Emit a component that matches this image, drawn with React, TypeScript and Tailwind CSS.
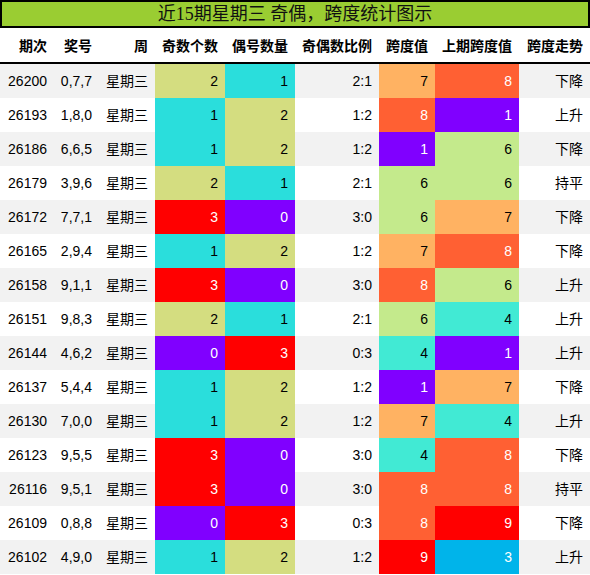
import React from "react";

type Row = [string, string, number, number, string, number, number, string];

const rows: Row[] = [
  ["26200", "0,7,7", 2, 1, "2:1", 7, 8, "下降"],
  ["26193", "1,8,0", 1, 2, "1:2", 8, 1, "上升"],
  ["26186", "6,6,5", 1, 2, "1:2", 1, 6, "下降"],
  ["26179", "3,9,6", 2, 1, "2:1", 6, 6, "持平"],
  ["26172", "7,7,1", 3, 0, "3:0", 6, 7, "下降"],
  ["26165", "2,9,4", 1, 2, "1:2", 7, 8, "下降"],
  ["26158", "9,1,1", 3, 0, "3:0", 8, 6, "上升"],
  ["26151", "9,8,3", 2, 1, "2:1", 6, 4, "上升"],
  ["26144", "4,6,2", 0, 3, "0:3", 4, 1, "上升"],
  ["26137", "5,4,4", 1, 2, "1:2", 1, 7, "下降"],
  ["26130", "7,0,0", 1, 2, "1:2", 7, 4, "上升"],
  ["26123", "9,5,5", 3, 0, "3:0", 4, 8, "下降"],
  ["26116", "9,5,1", 3, 0, "3:0", 8, 8, "持平"],
  ["26109", "0,8,8", 0, 3, "0:3", 8, 9, "下降"],
  ["26102", "4,9,0", 1, 2, "1:2", 9, 3, "上升"],
];

const countCls: Record<number, string> = {
  0: "bg-[#8000ff] text-white",
  1: "bg-[#2adedc] text-black",
  2: "bg-[#d4dd80] text-black",
  3: "bg-[#ff0000] text-white",
};

const spanCls: Record<number, string> = {
  0: "bg-[#8000ff] text-white",
  1: "bg-[#8000ff] text-white",
  2: "bg-[#2adedc] text-black",
  3: "bg-[#00b4ea] text-white",
  4: "bg-[#41ead4] text-black",
  5: "bg-[#d4dd80] text-black",
  6: "bg-[#c4ea8c] text-black",
  7: "bg-[#ffb262] text-black",
  8: "bg-[#ff6033] text-white",
  9: "bg-[#ff0000] text-white",
};

const grid =
  "grid grid-cols-[54px_45px_56px_70px_70px_84px_56px_84px_71px]";

const headers = ["期次", "奖号", "周", "奇数个数", "偶号数量", "奇偶数比例", "跨度值", "上期跨度值", "跨度走势"];

function Cell({ children, cls = "" }: { children: React.ReactNode; cls?: string }) {
  return (
    <div className={`flex items-center justify-end pr-[7px] h-[34px] ${cls}`}>
      {children}
    </div>
  );
}

export default function App() {
  return (
    <div
      className="w-[590px] h-[575px] bg-white text-[14px] text-black"
      style={{ fontFamily: '"Liberation Sans", "Noto Sans CJK SC", sans-serif' }}
    >
      <div
        className="h-[28px] border-2 border-black bg-[#9acd32] flex items-center justify-center text-[18px] text-[#111]"
        style={{ fontFamily: '"Liberation Serif", "Noto Sans CJK SC", serif' }}
      >
        近15期星期三 奇偶，跨度统计图示
      </div>
      <div className={`${grid} border-b-2 border-black`}>
        {headers.map((h) => (
          <Cell key={h} cls="font-bold pt-[3px]">
            {h}
          </Cell>
        ))}
      </div>
      {rows.map((r, i) => (
        <div key={r[0]} className={`${grid} ${i % 2 === 0 ? "bg-[#f2f2f2]" : "bg-white"}`}>
          <Cell>{r[0]}</Cell>
          <Cell>{r[1]}</Cell>
          <Cell>星期三</Cell>
          <Cell cls={countCls[r[2]]}>{r[2]}</Cell>
          <Cell cls={countCls[r[3]]}>{r[3]}</Cell>
          <Cell>{r[4]}</Cell>
          <Cell cls={spanCls[r[5]]}>{r[5]}</Cell>
          <Cell cls={spanCls[r[6]]}>{r[6]}</Cell>
          <Cell>{r[7]}</Cell>
        </div>
      ))}
    </div>
  );
}
